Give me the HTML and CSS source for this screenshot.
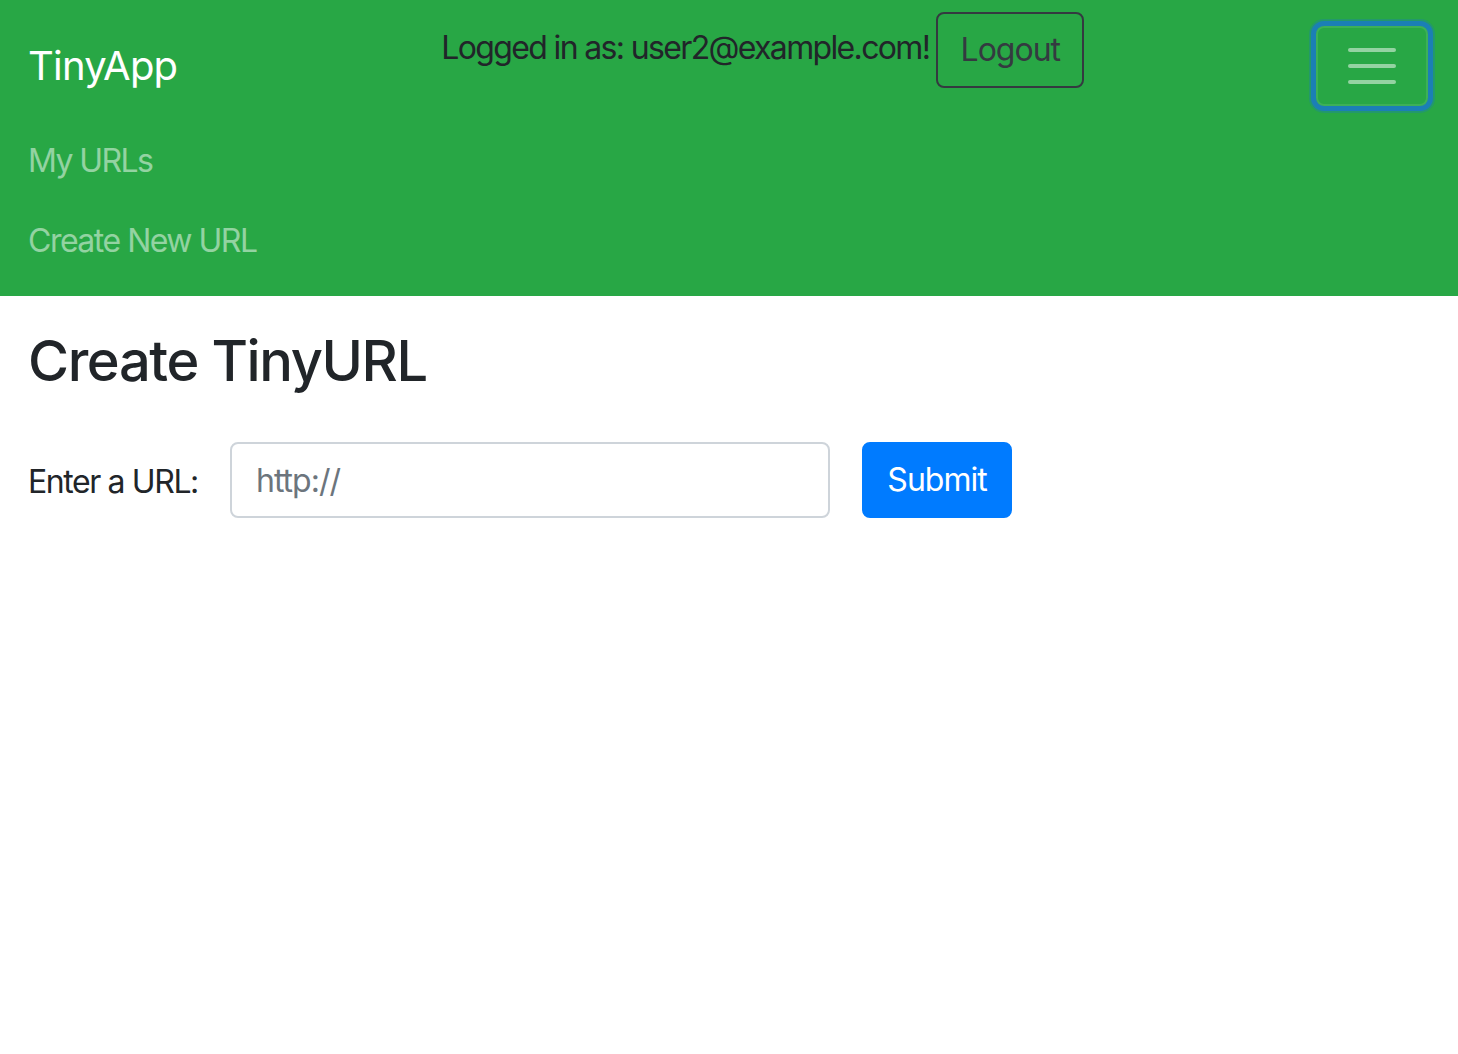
FILE: index.html
```html
<!DOCTYPE html>
<html lang="en">
<head>
<meta charset="utf-8">
<title>TinyApp</title>
<link rel="stylesheet" href="styles.css">
</head>
<body>
<nav class="navbar">
  <div class="navbar-top">
    <a class="brand" href="#">TinyApp</a>
    <div class="user-group">
      <span class="user-text">Logged in as: user2@example.com!</span>
      <button class="btn btn-outline">Logout</button>
    </div>
    <button class="toggler" aria-label="Toggle navigation">
      <span class="toggler-icon">
        <span class="bar"></span>
        <span class="bar"></span>
        <span class="bar"></span>
      </span>
    </button>
  </div>
  <ul class="nav-list">
    <li><a class="nav-link" href="#">My URLs</a></li>
    <li><a class="nav-link" href="#">Create New URL</a></li>
  </ul>
</nav>
<main class="content">
  <h1 class="title">Create TinyURL</h1>
  <form class="url-form">
    <label class="form-label" for="longURL">Enter a URL:</label>
    <input class="form-input" id="longURL" type="text" placeholder="http://">
    <button class="btn btn-primary" type="button">Submit</button>
  </form>
</main>
</body>
</html>
```
FILE: styles.css
```css
* { box-sizing: border-box; }

html, body {
  margin: 0;
  padding: 0;
  background: #ffffff;
  font-family: Inter, "Noto Sans", "Liberation Sans", sans-serif;
  color: #212529;
}

.navbar {
  background: #28a745;
  padding: 12px 30px 15px 28px;
}

.navbar-top {
  display: flex;
  align-items: flex-start;
  height: 94px;
}

.brand {
  margin-top: 24px;
  font-size: 40px;
  line-height: 60px;
  color: #ffffff;
  text-decoration: none;
  letter-spacing: -0.8px;
}

.user-group {
  display: flex;
  align-items: center;
  margin-left: 264px;
  height: 76px;
}

.user-text {
  font-size: 32px;
  line-height: 48px;
  color: #212529;
  letter-spacing: -1.65px;
  margin-right: 7px;
  margin-bottom: 4px;
}

.btn {
  font-family: inherit;
  font-size: 32px;
  line-height: 48px;
  padding: 12px 24px;
  border-radius: 8px;
  border: 2px solid transparent;
  cursor: pointer;
  letter-spacing: -1px;
}

.btn-outline {
  background: transparent;
  border-color: #343a40;
  color: #343a40;
  height: 76px;
  width: 148px;
  padding: 0;
}

.toggler {
  margin-left: auto;
  margin-top: 14px;
  width: 112px;
  height: 80px;
  padding: 8px 24px;
  background: transparent;
  border: 2px solid rgba(255, 255, 255, 0.1);
  border-radius: 8px;
  box-shadow: 0 0 0 5px #1b7fb5, 0 0 0 7px rgba(27, 127, 181, 0.35);
  display: flex;
  align-items: center;
  justify-content: center;
}

.toggler-icon {
  display: flex;
  flex-direction: column;
  gap: 12px;
  width: 48px;
}

.bar {
  display: block;
  height: 4px;
  border-radius: 2px;
  background: rgba(255, 255, 255, 0.5);
}

.nav-list {
  list-style: none;
  margin: 15px 0 0 0;
  padding: 0;
}

.nav-link {
  display: block;
  padding: 16px 0;
  font-size: 32px;
  line-height: 48px;
  color: rgba(255, 255, 255, 0.5);
  text-decoration: none;
  letter-spacing: -1.6px;
}

.nav-list li:last-child .nav-link {
  letter-spacing: -1.5px;
}

.content {
  padding: 0 28px;
}

.title {
  margin: 32px 0 0 0;
  font-size: 56px;
  line-height: 67px;
  font-weight: 500;
  letter-spacing: -1.4px;
  color: #212529;
}

.url-form {
  display: flex;
  align-items: center;
  margin-top: 47px;
}

.form-label {
  font-size: 32px;
  line-height: 48px;
  color: #212529;
  letter-spacing: -1.4px;
  width: 202px;
  padding-top: 3px;
}

.form-input {
  width: 600px;
  height: 76px;
  padding: 12px 24px;
  font-family: inherit;
  font-size: 32px;
  line-height: 48px;
  border: 2px solid #ced4da;
  border-radius: 8px;
  color: #495057;
  letter-spacing: -1px;
  outline: none;
}

.form-input::placeholder {
  color: #6c757d;
  opacity: 1;
}

.btn-primary {
  margin-left: 32px;
  background: #007bff;
  border-color: #007bff;
  color: #ffffff;
  height: 76px;
  width: 150px;
  padding: 0;
}
```
